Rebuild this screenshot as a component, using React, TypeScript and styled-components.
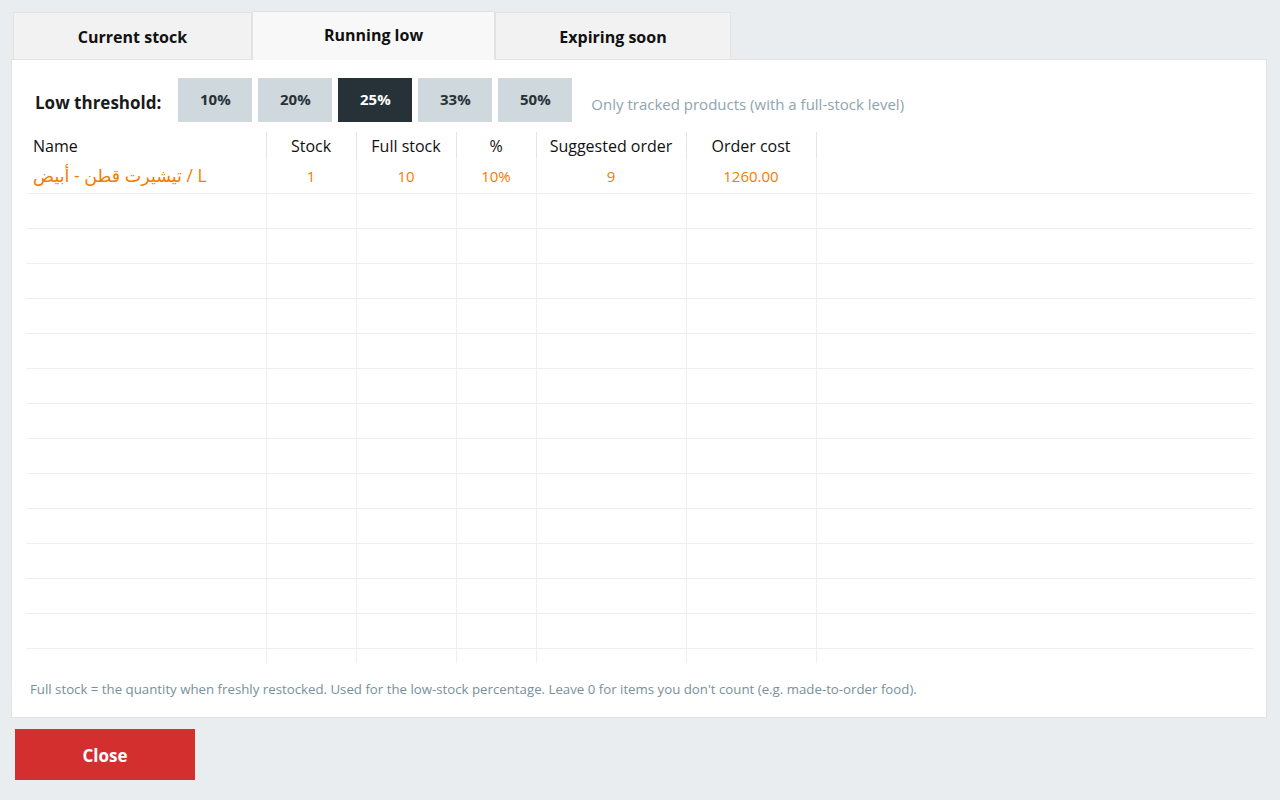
import React, { useState } from "react";
import styled, { createGlobalStyle } from "styled-components";

const GlobalStyle = createGlobalStyle`
  html, body {
    margin: 0;
    padding: 0;
    background: #e9edf0;
    font-family: "Open Sans", "DejaVu Sans", sans-serif;
    color: #111;
  }
  * { box-sizing: border-box; }
`;

const TABS = ["Current stock", "Running low", "Expiring soon"];
const TAB_WIDTHS = [239, 243, 236];
const THRESHOLDS = [10, 20, 25, 33, 50];

const COLUMNS = [
  { key: "name", label: "Name", width: 240, align: "left" },
  { key: "stock", label: "Stock", width: 90, align: "center" },
  { key: "full", label: "Full stock", width: 100, align: "center" },
  { key: "pct", label: "%", width: 80, align: "center" },
  { key: "suggested", label: "Suggested order", width: 150, align: "center" },
  { key: "cost", label: "Order cost", width: 130, align: "center" },
] as const;

const ROWS = [
  {
    name: "تيشيرت قطن - أبيض / L",
    stock: "1",
    full: "10",
    pct: "10%",
    suggested: "9",
    cost: "1260.00",
  },
];

const EMPTY_ROWS = 14;

const App = () => {
  const [tab, setTab] = useState(1);
  const [threshold, setThreshold] = useState(25);

  return (
    <Page>
      <GlobalStyle />
      <TabBar>
        {TABS.map((t, i) => (
          <Tab key={t} $active={i === tab} $width={TAB_WIDTHS[i]} onClick={() => setTab(i)}>
            {t}
          </Tab>
        ))}
      </TabBar>
      <Panel>
        <ThresholdRow>
          <ThresholdLabel>Low threshold:</ThresholdLabel>
          <Chips>
            {THRESHOLDS.map((v) => (
              <Chip key={v} $active={v === threshold} onClick={() => setThreshold(v)}>
                {v}%
              </Chip>
            ))}
          </Chips>
          <Hint>Only tracked products (with a full-stock level)</Hint>
        </ThresholdRow>

        <TableWrap>
          <Table>
            <colgroup>
              {COLUMNS.map((c) => (
                <col key={c.key} style={{ width: c.width }} />
              ))}
              <col />
            </colgroup>
            <thead>
              <tr>
                {COLUMNS.map((c) => (
                  <HeadCell key={c.key} $align={c.align}>
                    {c.label}
                  </HeadCell>
                ))}
                <FillHead />
              </tr>
            </thead>
            <tbody>
              {ROWS.map((r, i) => (
                <tr key={i}>
                  {COLUMNS.map((c) => (
                    <Cell key={c.key} $align={c.align} $name={c.key === "name"}>
                      {r[c.key]}
                    </Cell>
                  ))}
                  <FillCell />
                </tr>
              ))}
              {Array.from({ length: EMPTY_ROWS }).map((_, i) => (
                <tr key={`e${i}`}>
                  {COLUMNS.map((c) => (
                    <Cell key={c.key} $align={c.align} />
                  ))}
                  <FillCell />
                </tr>
              ))}
            </tbody>
          </Table>
        </TableWrap>

        <Footnote>
          Full stock = the quantity when freshly restocked. Used for the low-stock percentage. Leave 0 for items you
          don't count (e.g. made-to-order food).
        </Footnote>
      </Panel>
      <CloseButton>Close</CloseButton>
    </Page>
  );
};

const Page = styled.div`
  min-height: 100vh;
  padding: 11px 13px 20px 11px;
`;

const TabBar = styled.div`
  display: flex;
  align-items: flex-end;
  padding-left: 2px;
  margin-bottom: -1px;
  position: relative;
  z-index: 1;
`;

const Tab = styled.div<{ $active: boolean; $width: number }>`
  display: flex;
  align-items: center;
  justify-content: center;
  width: ${(p) => p.$width}px;
  height: ${(p) => (p.$active ? 49 : 48)}px;
  background: ${(p) => (p.$active ? "#f8f8f8" : "#f2f2f2")};
  border: 1px solid #e2e2e2;
  border-bottom-color: ${(p) => (p.$active ? "#f8f8f8" : "#e2e2e2")};
  font-size: 16px;
  font-weight: 700;
  color: #111;
  padding-top: ${(p) => (p.$active ? 0 : 2)}px;
  padding-bottom: ${(p) => (p.$active ? 2 : 0)}px;
  cursor: pointer;
`;

const Panel = styled.div`
  background: #fff;
  border: 1px solid #e2e2e2;
  padding: 18px 13px 19px 14px;
`;

const ThresholdRow = styled.div`
  display: flex;
  align-items: center;
  padding-left: 9px;
`;

const ThresholdLabel = styled.div`
  font-size: 17px;
  font-weight: 700;
  color: #1a1a1a;
  margin-right: 17px;
  padding-top: 5px;
`;

const Chips = styled.div`
  display: flex;
  gap: 6px;
`;

const Chip = styled.button<{ $active: boolean }>`
  width: 74px;
  height: 44px;
  border: none;
  padding: 0 0 2px;
  font-family: inherit;
  font-size: 15px;
  font-weight: 700;
  background: ${(p) => (p.$active ? "#263238" : "#cfd8dc")};
  color: ${(p) => (p.$active ? "#fff" : "#263238")};
  cursor: pointer;
`;

const Hint = styled.div`
  margin-left: 19px;
  padding-top: 8px;
  font-size: 15px;
  color: #90a4ae;
`;

const TableWrap = styled.div`
  margin-top: 10px;
  height: 531px;
  overflow: hidden;
`;

const Table = styled.table`
  width: 100%;
  border-collapse: collapse;
  table-layout: fixed;
`;

const HeadCell = styled.th<{ $align: string }>`
  height: 26px;
  padding: 2px 7px 0;
  font-size: 16px;
  font-weight: 400;
  color: #111;
  text-align: ${(p) => p.$align};
  border-right: 1px solid #e4e4e4;
  white-space: nowrap;
`;

const FillHead = styled.th``;

const Cell = styled.td<{ $align: string; $name?: boolean }>`
  height: 35px;
  padding: ${(p) => (p.$name ? 0 : 2)}px 7px 0;
  font-size: ${(p) => (p.$name ? 17.5 : 15)}px;
  color: #f57c00;
  text-align: ${(p) => p.$align};
  border-right: 1px solid #efefef;
  border-bottom: 1px solid #eeeeee;
  white-space: nowrap;
`;

const FillCell = styled.td`
  border-bottom: 1px solid #eeeeee;
`;

const Footnote = styled.div`
  margin-top: 17px;
  padding-left: 4px;
  font-size: 13.25px;
  line-height: 18px;
  color: #78909c;
`;

const CloseButton = styled.button`
  display: block;
  margin: 11px 0 0 4px;
  width: 180px;
  height: 51px;
  border: none;
  padding: 2px 0 0;
  background: #d32f2f;
  color: #fff;
  font-family: inherit;
  font-size: 17px;
  font-weight: 700;
  cursor: pointer;
`;

export default App;
